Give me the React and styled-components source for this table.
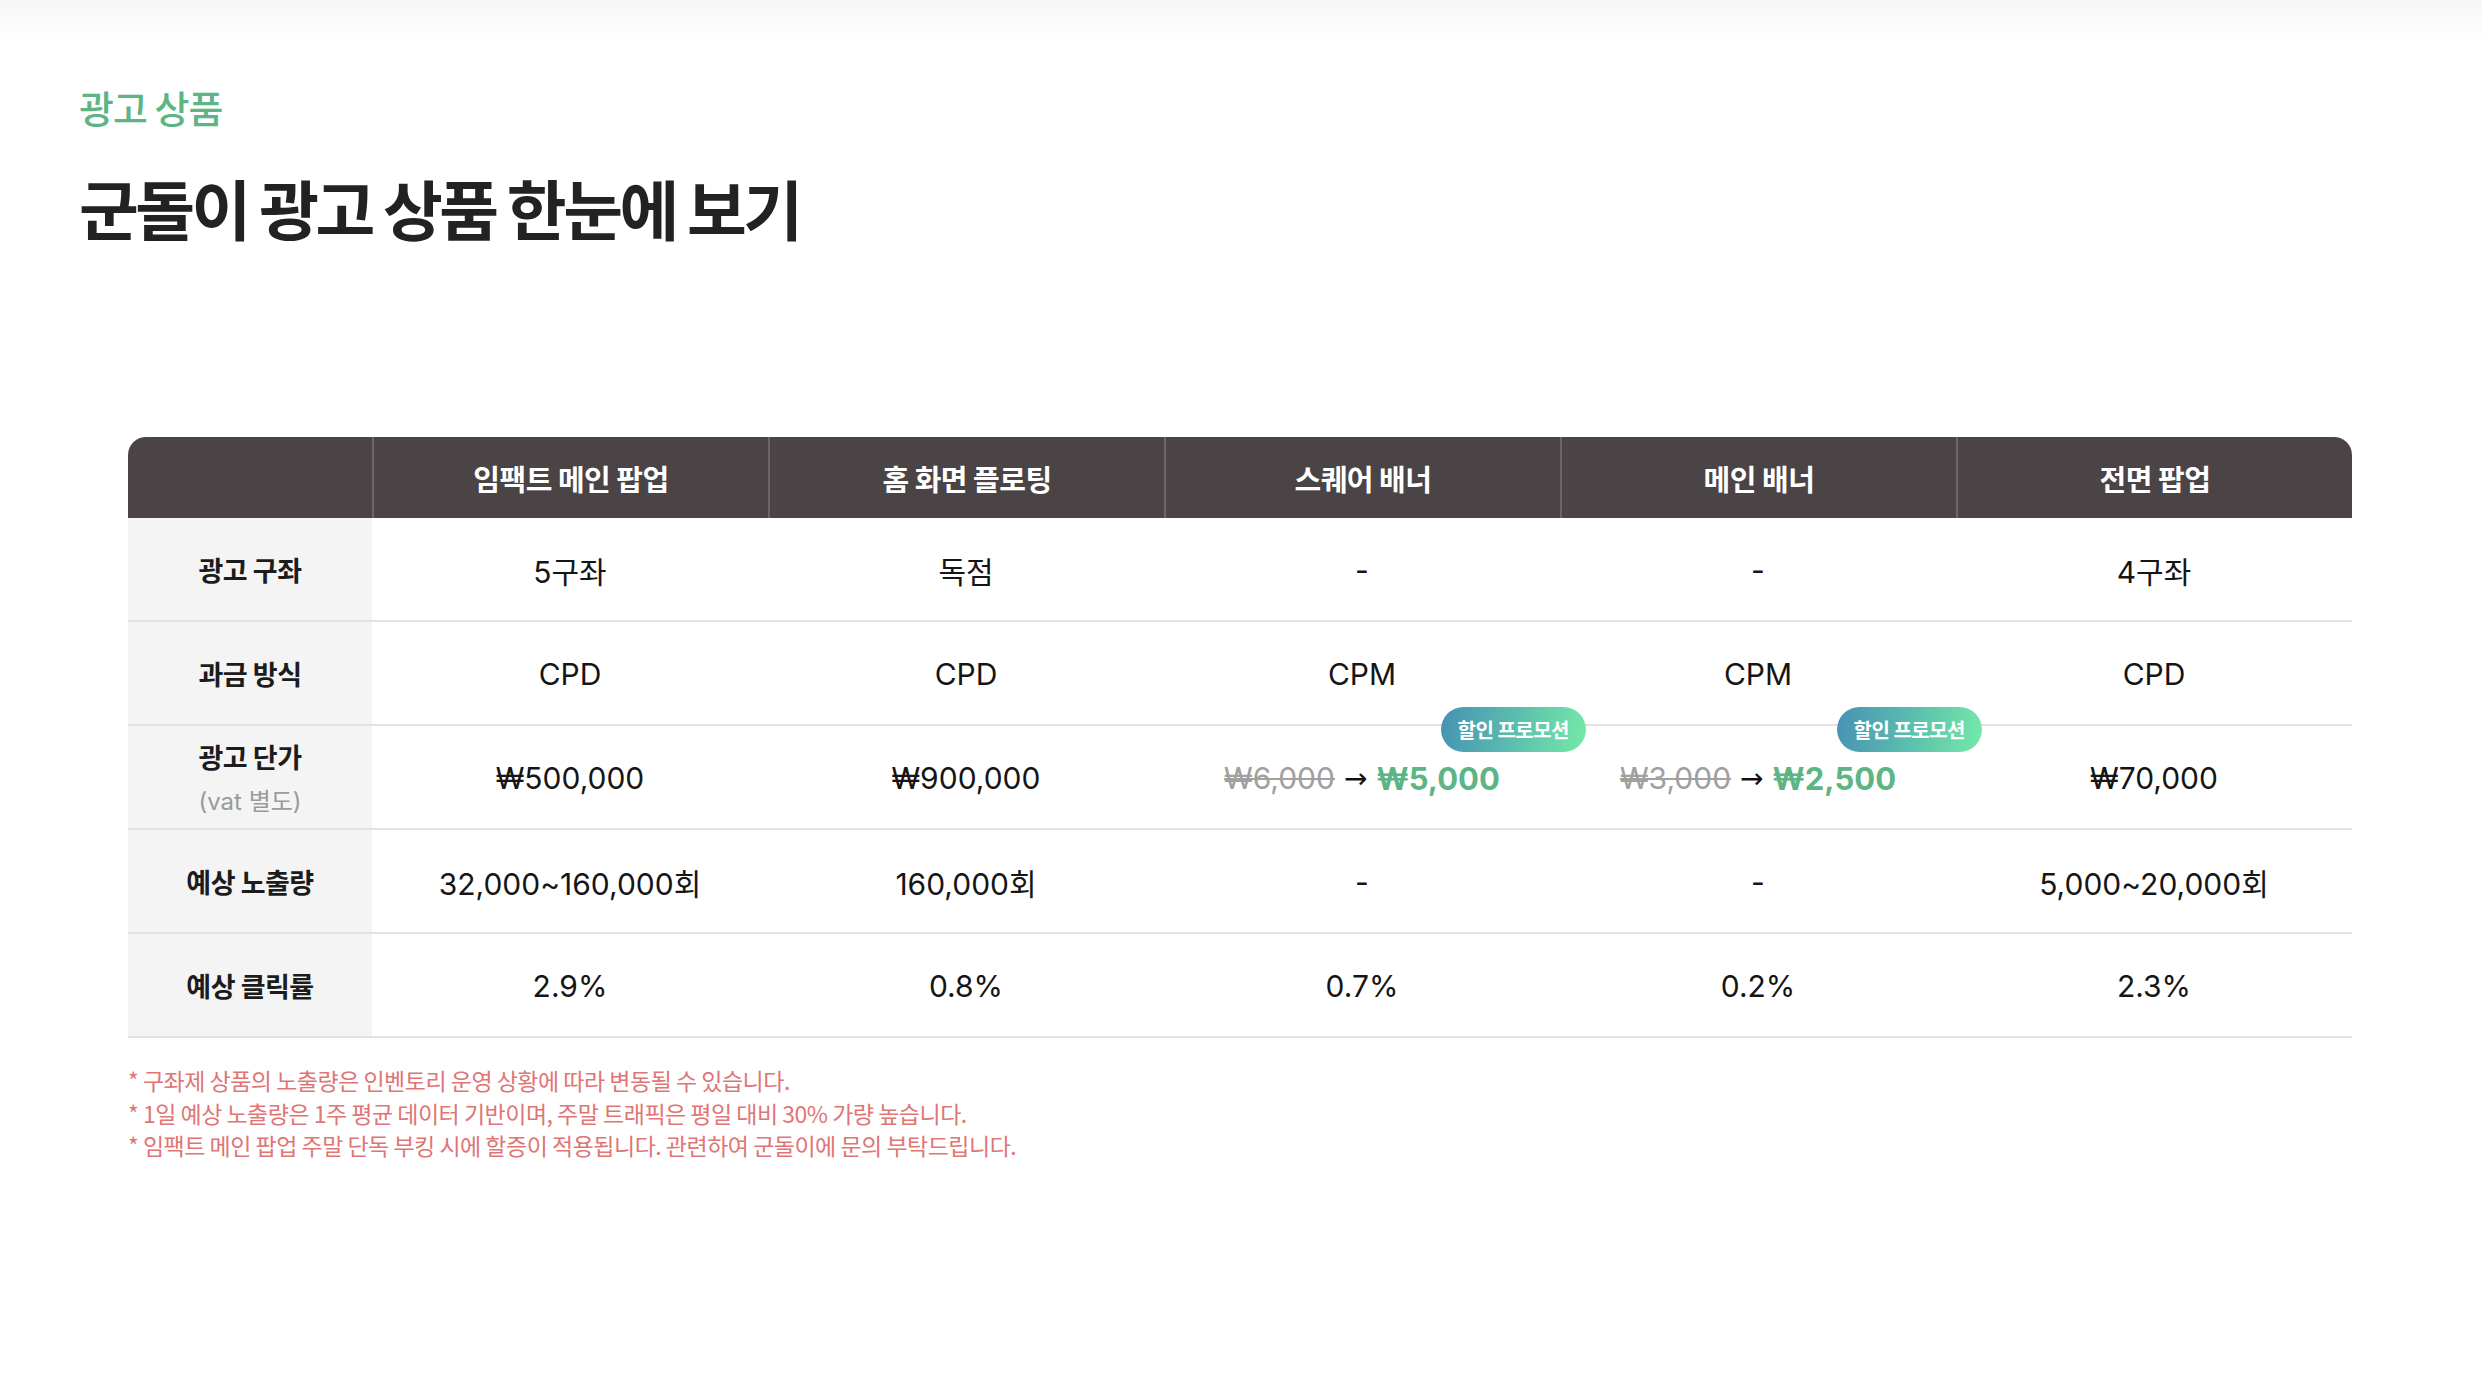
import styled, { createGlobalStyle } from "styled-components";

const GlobalStyle = createGlobalStyle`
  html, body {
    margin: 0;
    padding: 0;
    background: #ffffff;
  }
  body {
    font-family: Inter, "Noto Sans CJK KR", sans-serif;
    color: #1a1a1a;
  }
`

const columns = ["임팩트 메인 팝업", "홈 화면 플로팅", "스퀘어 배너", "메인 배너", "전면 팝업"]

const rows = [
  { label: "광고 구좌", cells: ["5구좌", "독점", "-", "-", "4구좌"] },
  { label: "과금 방식", cells: ["CPD", "CPD", "CPM", "CPM", "CPD"] },
  {
    label: "광고 단가",
    sub: "(vat 별도)",
    cells: [
      "₩500,000",
      "₩900,000",
      { old: "₩6,000", now: "₩5,000" },
      { old: "₩3,000", now: "₩2,500" },
      "₩70,000",
    ],
  },
  { label: "예상 노출량", cells: ["32,000~160,000회", "160,000회", "-", "-", "5,000~20,000회"] },
  { label: "예상 클릭률", cells: ["2.9%", "0.8%", "0.7%", "0.2%", "2.3%"] },
]

const notes = [
  "* 구좌제 상품의 노출량은 인벤토리 운영 상황에 따라 변동될 수 있습니다.",
  "* 1일 예상 노출량은 1주 평균 데이터 기반이며, 주말 트래픽은 평일 대비 30% 가량 높습니다.",
  "* 임팩트 메인 팝업 주말 단독 부킹 시에 할증이 적용됩니다. 관련하여 군돌이에 문의 부탁드립니다.",
]

function App() {
  return (
    <Page>
      <GlobalStyle />
      <Heading>
        <Eyebrow>광고 상품</Eyebrow>
        <Title>군돌이 광고 상품 한눈에 보기</Title>
      </Heading>
      <TableWrap>
        <Table>
          <HeadRow>
            <HeadCell />
            {columns.map((c) => (
              <HeadCell key={c}>{c}</HeadCell>
            ))}
          </HeadRow>
          {rows.map((r) => (
            <BodyRow key={r.label}>
              <LabelCell>
                <span>{r.label}</span>
                {r.sub && <Sub>{r.sub}</Sub>}
              </LabelCell>
              {r.cells.map((c, i) => (
                <Cell key={i}>
                  {typeof c === "string" ? (
                    c
                  ) : (
                    <>
                      <Badge>할인 프로모션</Badge>
                      <Price>
                        <OldPrice>{c.old}</OldPrice>
                        <Arrow>→</Arrow>
                        <NewPrice>{c.now}</NewPrice>
                      </Price>
                    </>
                  )}
                </Cell>
              ))}
            </BodyRow>
          ))}
        </Table>
        <Notes>
          {notes.map((n) => (
            <li key={n}>{n}</li>
          ))}
        </Notes>
      </TableWrap>
    </Page>
  )
}

export default App

const Page = styled.div`
    min-height: 1382px;
    box-sizing: border-box;
    background: linear-gradient(to bottom, #f6f6f6 0px, #fbfbfb 26px, #ffffff 44px);
    padding-top: 84px;
`

const Heading = styled.div`
    padding: 0 79px;
`

const Eyebrow = styled.div`
    color: #5db585;
    font-family: "Noto Sans CJK KR", sans-serif;
    font-size: 38px;
    font-weight: 500;
    letter-spacing: -1px;
    line-height: 46px;
`

const Title = styled.h1`
    margin: 37px 0 0 0;
    color: #222222;
    font-family: "Noto Sans CJK KR", sans-serif;
    font-size: 65px;
    font-weight: 700;
    letter-spacing: -3.5px;
    line-height: 80px;
`

const TableWrap = styled.div`
    padding: 0 130px 0 128px;
    margin-top: 190px;
`

const Table = styled.div`
    display: grid;
    grid-template-columns: 244px repeat(5, 1fr);
`

const HeadRow = styled.div`
    display: contents;
`

const HeadCell = styled.div`
    height: 81px;
    background: #4a4446;
    color: #ffffff;
    font-family: "Noto Sans CJK KR", sans-serif;
    font-size: 29px;
    font-weight: 700;
    letter-spacing: -0.5px;
    display: flex;
    align-items: center;
    justify-content: center;
    border-left: 2px solid #6b6567;

    &:first-child{
        border-left: none;
        border-top-left-radius: 18px;
    }
    &:last-child{
        border-top-right-radius: 18px;
    }
`

const BodyRow = styled.div`
    display: contents;

    & > div{
        box-sizing: border-box;
        height: 104px;
        border-bottom: 2px solid #e2e2e2;
    }
`

const LabelCell = styled.div`
    background: #f4f4f4;
    display: flex;
    flex-direction: column;
    align-items: center;
    justify-content: center;
    gap: 6px;
    font-family: "Noto Sans CJK KR", sans-serif;
    font-size: 27px;
    font-weight: 700;
    color: #1c1c1c;
    letter-spacing: -0.5px;
`

const Sub = styled.span`
    font-family: Inter, "Noto Sans CJK KR", sans-serif;
    font-size: 24px;
    font-weight: 400;
    color: #9a9a9a;
    letter-spacing: 0;
`

const Cell = styled.div`
    position: relative;
    display: flex;
    align-items: center;
    justify-content: center;
    padding-top: 2px;
    font-family: Inter, "Noto Sans CJK KR", sans-serif;
    font-size: 30px;
    font-weight: 400;
    color: #151515;
`

const Badge = styled.div`
    position: absolute;
    top: -19px;
    right: -26px;
    z-index: 2;
    height: 45px;
    padding: 0 17px;
    border-radius: 23px;
    display: flex;
    align-items: center;
    background: linear-gradient(100deg, #4692b5 0%, #5bbdae 50%, #74eaa8 100%);
    color: #ffffff;
    font-family: "Noto Sans CJK KR", sans-serif;
    font-size: 20px;
    font-weight: 700;
    letter-spacing: -0.5px;
`

const Price = styled.div`
    display: flex;
    align-items: center;
    gap: 9px;
`

const OldPrice = styled.span`
    color: #a0a0a0;
    text-decoration: line-through;
    text-decoration-thickness: 2px;
`

const Arrow = styled.span`
    color: #111111;
    font-size: 28px;
    font-family: "DejaVu Sans", sans-serif;
`

const NewPrice = styled.span`
    color: #5db585;
    font-weight: 700;
    font-size: 31px;
`

const Notes = styled.ul`
    list-style: none;
    margin: 26px 0 0 0;
    padding: 0;

    li{
        color: #e07575;
        font-family: "Noto Sans CJK KR", sans-serif;
        font-size: 23px;
        line-height: 32.5px;
        letter-spacing: -0.5px;
    }
`
